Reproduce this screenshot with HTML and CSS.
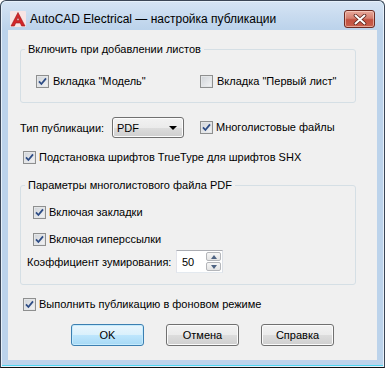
FILE: index.html
```html
<!DOCTYPE html>
<html lang="ru">
<head>
    <meta charset="UTF-8">
    <title>AutoCAD Electrical — настройка публикации</title>
    <link rel="stylesheet" href="styles.css">
</head>
<body>
    <div class="window">
        <div class="titlebar">
            <svg class="app-icon" width="16" height="16" viewBox="0 0 16 16">
                <rect x="0" y="0" width="16" height="16" rx="1" fill="#f7e4e4"/>
                <path d="M8 1.5 L15 15 H11.6 L10.3 12 H5.7 L4.4 15 H1 Z M8 6 L6.6 9.6 H9.4 Z" fill="#d3262a" stroke="#9c1418" stroke-width="0.6" fill-rule="evenodd"/>
            </svg>
            <span class="title">AutoCAD Electrical — настройка публикации</span>
            <div class="close">
                <svg width="14" height="11" viewBox="0 0 14 11">
                    <path d="M2.5 1.5 L11.5 9.5 M11.5 1.5 L2.5 9.5" stroke="#5a2219" stroke-width="3.6" stroke-linecap="round"/>
                    <path d="M2.5 1.5 L11.5 9.5 M11.5 1.5 L2.5 9.5" stroke="#ffffff" stroke-width="2" stroke-linecap="round"/>
                </svg>
            </div>
        </div>

        <div class="client">
            <fieldset class="group group-sheets">
                <legend>Включить при добавлении листов</legend>
                <div class="sheets-row">
                    <label class="check model-tab">
                        <span class="box"><svg width="11" height="11" viewBox="0 0 11 11"><path d="M2 5.4 L4.4 8 L9 2.4" fill="none" stroke="#2d4c85" stroke-width="1.8"/></svg></span>
                        Вкладка "Модель"
                    </label>
                    <label class="check">
                        <span class="box"></span>
                        Вкладка "Первый лист"
                    </label>
                </div>
            </fieldset>

            <div class="type-row">
                <span class="type-label">Тип публикации:</span>
                <div class="combo">
                    <span>PDF</span>
                    <span class="arrow"></span>
                </div>
                <label class="check multi">
                    <span class="box"><svg width="11" height="11" viewBox="0 0 11 11"><path d="M2 5.4 L4.4 8 L9 2.4" fill="none" stroke="#2d4c85" stroke-width="1.8"/></svg></span>
                    Многолистовые файлы
                </label>
            </div>

            <label class="check line-check truetype">
                <span class="box"><svg width="11" height="11" viewBox="0 0 11 11"><path d="M2 5.4 L4.4 8 L9 2.4" fill="none" stroke="#2d4c85" stroke-width="1.8"/></svg></span>
                Подстановка шрифтов TrueType для шрифтов SHX
            </label>

            <fieldset class="group group-pdf">
                <legend>Параметры многолистового файла PDF</legend>
                <label class="check pdf-check">
                    <span class="box"><svg width="11" height="11" viewBox="0 0 11 11"><path d="M2 5.4 L4.4 8 L9 2.4" fill="none" stroke="#2d4c85" stroke-width="1.8"/></svg></span>
                    Включая закладки
                </label>
                <label class="check pdf-check second">
                    <span class="box"><svg width="11" height="11" viewBox="0 0 11 11"><path d="M2 5.4 L4.4 8 L9 2.4" fill="none" stroke="#2d4c85" stroke-width="1.8"/></svg></span>
                    Включая гиперссылки
                </label>
                <div class="zoom-row">
                    <span class="zoom-label">Коэффициент зумирования:</span>
                    <div class="spinner">
                        <span class="value">50</span>
                        <div class="spin-buttons">
                            <span class="spin up"></span>
                            <span class="spin down"></span>
                        </div>
                    </div>
                </div>
            </fieldset>

            <label class="check line-check background">
                <span class="box"><svg width="11" height="11" viewBox="0 0 11 11"><path d="M2 5.4 L4.4 8 L9 2.4" fill="none" stroke="#2d4c85" stroke-width="1.8"/></svg></span>
                Выполнить публикацию в фоновом режиме
            </label>

            <div class="buttons">
                <button class="btn default">OK</button>
                <button class="btn">Отмена</button>
                <button class="btn">Справка</button>
            </div>
        </div>
    </div>
</body>
</html>
```

FILE: styles.css
```css
* {
    box-sizing: border-box;
}

body {
    margin: 0;
    background-color: #ffffff;
    font-family: "Liberation Sans", Arial, sans-serif;
    font-size: 11px;
    color: #000;
}

.window {
    width: 385px;
    height: 368px;
    display: flex;
    flex-direction: column;
    border: 1px solid #3b4656;
    border-bottom-color: #111;
    border-radius: 6px 6px 0 0;
    background: linear-gradient(#d6e4f4, #bcd3eb 28px, #bcd3eb);
    box-shadow: inset 0 0 0 1px #e6f0fa, inset 0 -1px 0 1px #4fd6f0;
}

.titlebar {
    height: 29px;
    flex-shrink: 0;
    display: flex;
    align-items: center;
    padding: 7px 9px 0 9px;
}

.app-icon {
    flex-shrink: 0;
}

.title {
    margin-left: 4px;
    font-size: 12px;
    color: #000;
    white-space: nowrap;
}

.close {
    margin-left: auto;
    width: 31px;
    height: 18px;
    display: flex;
    align-items: center;
    justify-content: center;
    border: 1px solid #6e2b22;
    border-radius: 3px;
    background: linear-gradient(#e9a99b, #d47f6f 45%, #c2503f 55%, #c8604c);
    box-shadow: inset 0 0 0 1px rgba(255, 220, 210, 0.55);
}

.client {
    height: 330px;
    margin: 0 7px 7px 7px;
    background-color: #f0f0f0;
    display: flex;
    flex-direction: column;
    align-items: flex-start;
}

/* group boxes */
.group {
    margin: 0 0 0 12px;
    width: 336px;
    min-inline-size: 0;
    padding: 0;
    border: 1px solid #d5dfe5;
    border-radius: 3px;
    display: flex;
    flex-direction: column;
    align-items: flex-start;
}

.group legend {
    margin-left: 4px;
    padding: 0 3px;
    line-height: 13px;
}

.group-sheets {
    margin-top: 13px;
    padding-top: 19px;
    padding-bottom: 14px;
}

.sheets-row {
    display: flex;
    margin-left: 15px;
}

.model-tab {
    width: 164px;
}

.group-pdf {
    margin-top: 15px;
    padding-top: 14px;
    padding-bottom: 11px;
}

/* checkboxes */
.check {
    display: flex;
    align-items: center;
    gap: 3px;
    height: 13px;
    line-height: 13px;
    white-space: nowrap;
}

.box {
    width: 13px;
    height: 13px;
    flex-shrink: 0;
    display: flex;
    border: 1px solid #8e8f8f;
    background: linear-gradient(135deg, #cfd3d8, #f4f4f5);
    box-shadow: inset 0 0 0 1px #e4e6e8;
}

.box svg {
    display: block;
}

.model-tab,
.group-sheets .check {
    gap: 4px;
}

.line-check {
    margin-left: 15px;
}

.truetype {
    margin-top: 13px;
}

.background {
    margin-top: 13px;
}

.pdf-check {
    margin-left: 12px;
}

.pdf-check.second {
    margin-top: 14px;
}

/* publication type row */
.type-row {
    margin-top: 14px;
    height: 21px;
    display: flex;
    align-items: center;
    padding-left: 12px;
}

.type-label {
    width: 92px;
}

.combo {
    width: 72px;
    height: 21px;
    display: flex;
    align-items: center;
    justify-content: space-between;
    padding: 0 6px 0 4px;
    border: 1px solid #707070;
    border-radius: 3px;
    background: linear-gradient(#f2f2f2, #ebebeb 50%, #dddddd 50%, #cfcfcf);
    box-shadow: inset 0 0 0 1px #fcfcfc;
}

.arrow {
    width: 0;
    height: 0;
    border-left: 4px solid transparent;
    border-right: 4px solid transparent;
    border-top: 4px solid #000;
}

.multi {
    margin-left: 16px;
}

/* zoom factor */
.zoom-row {
    margin: 4px 0 0 6px;
    display: flex;
    align-items: center;
    height: 23px;
}

.zoom-label {
    width: 149px;
}

.spinner {
    width: 47px;
    height: 23px;
    display: flex;
    align-items: center;
    justify-content: space-between;
    padding: 1px 1px 1px 5px;
    border: 1px solid #abadb3;
    border-bottom-color: #e3e9ef;
    border-left-color: #e2e3ea;
    border-right-color: #dbdfe6;
    background-color: #ffffff;
}

.spin-buttons {
    display: flex;
    flex-direction: column;
    gap: 1px;
    height: 100%;
}

.spin {
    flex: 1;
    width: 15px;
    display: flex;
    align-items: center;
    justify-content: center;
    border: 1px solid #b4b6ba;
    border-radius: 2px;
    background: linear-gradient(#f6f6f6, #e4e4e4);
}

.spin::after {
    content: "";
    width: 0;
    height: 0;
    border-left: 3.5px solid transparent;
    border-right: 3.5px solid transparent;
}

.spin.up::after {
    border-bottom: 4px solid #4e6382;
}

.spin.down::after {
    border-top: 4px solid #4e6382;
}

/* dialog buttons */
.buttons {
    margin-top: 13px;
    display: flex;
    gap: 22px;
    padding-left: 63px;
}

.btn {
    width: 73px;
    height: 22px;
    padding: 0;
    font-family: inherit;
    font-size: 11px;
    color: #000;
    border: 1px solid #707070;
    border-radius: 3px;
    background: linear-gradient(#f2f2f2, #ebebeb 50%, #dddddd 50%, #cfcfcf);
    box-shadow: inset 0 0 0 1px #fbfbfb;
}

.btn.default {
    border-color: #3c7fb1;
    background: linear-gradient(#eaf6fd, #d9f0fc 50%, #bee6fd 50%, #a7d9f5);
    box-shadow: inset 0 0 0 1px #c5ebfd;
}
```
